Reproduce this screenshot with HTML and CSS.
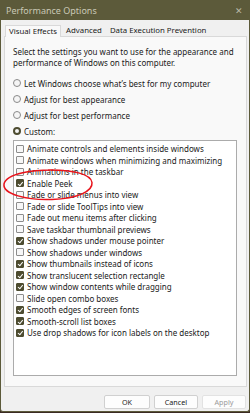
FILE: index.html
```html
<!DOCTYPE html>
<html>
<head>
<meta charset="utf-8">
<link rel="stylesheet" href="styles.css">
</head>
<body>
<div class="window">
  <div class="titlebar">
    <span class="title">Performance Options</span>
    <span class="close">✕</span>
  </div>
  <div class="tabs">
    <span class="tab active">Visual Effects</span>
    <span class="tab">Advanced</span>
    <span class="tab">Data Execution Prevention</span>
  </div>
  <div class="panel">
    <p class="intro">Select the settings you want to use for the appearance and performance of Windows on this computer.</p>
    <div class="radios">
      <div class="radio"><span class="rb"></span>Let Windows choose what’s best for my computer</div>
      <div class="radio"><span class="rb"></span>Adjust for best appearance</div>
      <div class="radio"><span class="rb"></span>Adjust for best performance</div>
      <div class="radio"><span class="rb on"></span>Custom:</div>
    </div>
    <div class="list">
      <div class="item"><span class="cb"></span>Animate controls and elements inside windows</div>
      <div class="item"><span class="cb"></span>Animate windows when minimizing and maximizing</div>
      <div class="item"><span class="cb"></span>Animations in the taskbar</div>
      <div class="item"><span class="cb on"></span>Enable Peek</div>
      <div class="item"><span class="cb"></span>Fade or slide menus into view</div>
      <div class="item"><span class="cb"></span>Fade or slide ToolTips into view</div>
      <div class="item"><span class="cb"></span>Fade out menu items after clicking</div>
      <div class="item"><span class="cb"></span>Save taskbar thumbnail previews</div>
      <div class="item"><span class="cb on"></span>Show shadows under mouse pointer</div>
      <div class="item"><span class="cb"></span>Show shadows under windows</div>
      <div class="item"><span class="cb on"></span>Show thumbnails instead of icons</div>
      <div class="item"><span class="cb on"></span>Show translucent selection rectangle</div>
      <div class="item"><span class="cb on"></span>Show window contents while dragging</div>
      <div class="item"><span class="cb"></span>Slide open combo boxes</div>
      <div class="item"><span class="cb on"></span>Smooth edges of screen fonts</div>
      <div class="item"><span class="cb on"></span>Smooth-scroll list boxes</div>
      <div class="item"><span class="cb on"></span>Use drop shadows for icon labels on the desktop</div>
    </div>
  </div>
  <div class="buttons">
    <span class="btn ok">OK</span>
    <span class="btn cancel">Cancel</span>
    <span class="btn apply">Apply</span>
  </div>
  <svg class="annot" width="92" height="34" viewBox="0 0 92 34">
    <path d="M62 2.5 C 30 0.5, 4 6, 2 16 C 0.5 26, 25 32.5, 50 31.5 C 76 30.5, 91 23, 90 14.5 C 89 6, 70 1.5, 46 2" fill="none" stroke="#e8141c" stroke-width="1.5"/>
  </svg>
</div>
</body>
</html>
```

FILE: styles.css
```css
* { box-sizing: border-box; }
html, body { margin: 0; padding: 0; background: #3b2a22; }
body {
  width: 250px;
  height: 413px;
  font-family: "Noto Sans", "Open Sans", sans-serif;
  font-size: 8px;
  color: #1a1a1a;
}
.window {
  position: relative;
  width: 250px;
  height: 412px;
  background: #f0f0f0;
  border: 1px solid #5c5a3a;
  border-top: none;
  border-radius: 0 0 3px 3px;
  display: flex;
  flex-direction: column;
}
.titlebar {
  height: 20px;
  margin: 0 -1px;
  background: #5c5a3a;
  display: flex;
  align-items: center;
  justify-content: space-between;
  padding: 0 7px 0 6px;
  color: #c9c8b6;
  font-size: 9px;
}
.close { font-size: 9px; color: #b9b8a6; }
.tabs {
  display: flex;
  padding: 4px 0 0 4px;
  height: 16px;
  align-items: flex-end;
}
.tab {
  height: 11px;
  line-height: 10px;
  padding: 0 3px;
  margin-right: 2px;
  font-size: 7.8px;
  color: #1a1a1a;
}
.tab.active {
  height: 12px;
  background: #f9f9f9;
  border: 1px solid #d9d9d9;
  border-bottom: none;
  margin-bottom: -1px;
  position: relative;
  z-index: 1;
}
.panel {
  height: 351px;
  margin: 0 2px 0 3px;
  background: #f9f9f9;
  border: 1px solid #d9d9d9;
  padding: 9px 8px 0 8px;
  display: flex;
  flex-direction: column;
}
.intro {
  margin: 0;
  line-height: 11px;
  width: 228px;
}
.radios { margin-top: 7px; }
.radio {
  height: 16px;
  display: flex;
  align-items: center;
}
.rb {
  width: 8px;
  height: 8px;
  border: 1px solid #8a8a8a;
  border-radius: 50%;
  margin-right: 3px;
  background: #f5f5f5;
}
.rb.on {
  background: #f5f5f5;
  border: 2.5px solid #4d4c30;
}
.list {
  margin-top: 1px;
  width: 224px;
  height: 236px;
  background: #ffffff;
  border: 1px solid #ababab;
  padding: 2px 0 0 2px;
}
.item {
  height: 11.5px;
  display: flex;
  align-items: center;
}
.cb {
  width: 8px;
  height: 8px;
  border: 1px solid #8c8c8c;
  border-radius: 1px;
  margin-right: 3px;
  background: #f7f7f7;
  position: relative;
}
.cb.on {
  background: #4d4c30;
  border-color: #4d4c30;
}
.cb.on::after {
  content: "";
  position: absolute;
  left: 1.5px;
  top: 0.3px;
  width: 2px;
  height: 3.6px;
  border-right: 1px solid #ffffff;
  border-bottom: 1px solid #ffffff;
  transform: rotate(40deg);
}
.buttons {
  display: flex;
  justify-content: flex-end;
  gap: 4px;
  padding: 8px 3px 0 0;
}
.btn {
  height: 14px;
  background: #fdfdfd;
  border: 1px solid #d0d0d0;
  border-radius: 2px;
  font-size: 7.2px;
  display: flex;
  align-items: center;
  justify-content: center;
}
.ok { width: 46px; }
.cancel { width: 44px; }
.apply { width: 44px; color: #9a9a9a; border-color: #e2e2e2; }
.annot {
  position: absolute;
  left: 1px;
  top: 168px;
}
```
